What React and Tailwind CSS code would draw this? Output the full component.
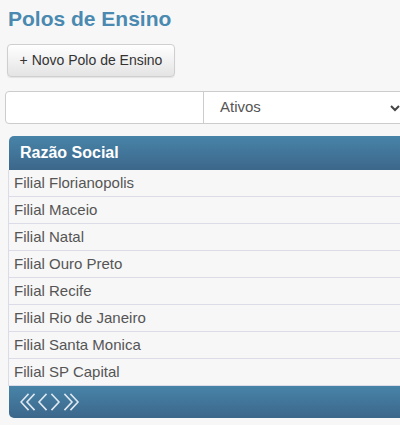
import React from "react";

const rows = [
  "Filial Florianopolis",
  "Filial Maceio",
  "Filial Natal",
  "Filial Ouro Preto",
  "Filial Recife",
  "Filial Rio de Janeiro",
  "Filial Santa Monica",
  "Filial SP Capital",
];

function Pager() {
  return (
    <svg width="64" height="18" viewBox="0 0 64 18" fill="none" stroke="#dfe8f0" strokeWidth="1.6" strokeLinecap="square">
      <polyline points="8,1.5 1,9 8,16.5" />
      <polyline points="14,1.5 7,9 14,16.5" />
      <polyline points="26,1.5 19,9 26,16.5" />
      <polyline points="32,1.5 39,9 32,16.5" />
      <polyline points="45,1.5 52,9 45,16.5" />
      <polyline points="51,1.5 58,9 51,16.5" />
    </svg>
  );
}

export default function App() {
  return (
    <div className="w-[400px] h-[425px] overflow-hidden bg-[#f7f7f7] font-['Liberation_Sans',Arial,sans-serif]">
      <h1 className="pl-[8px] pt-[5px] text-[21px] leading-[28px] font-bold text-[#4a89b0]">Polos de Ensino</h1>
      <div className="pl-[7px] mt-[11px]">
        <button className="h-[33px] w-[168px] rounded-[4px] border border-[#cfcfcf] bg-gradient-to-b from-white to-[#e4e4e4] text-[14px] text-[#333] shadow-[0_1px_1px_rgba(0,0,0,0.08)]">
          + Novo Polo de Ensino
        </button>
      </div>
      <div className="flex mt-[14px] pl-[5px] w-[420px]">
        <input className="h-[33px] w-[199px] shrink-0 rounded-l-[4px] border border-[#cccccc] bg-white outline-none" />
        <div className="relative h-[33px] w-[200px] shrink-0 -ml-px border border-[#cccccc] bg-white flex items-center">
          <span className="pl-[16px] text-[15px] text-[#555]">Ativos</span>
          <svg className="absolute left-[186px] top-[13px]" width="10" height="7" viewBox="0 0 10 7" fill="none" stroke="#444" strokeWidth="2">
            <polyline points="1,1 5,5 9,1" />
          </svg>
        </div>
      </div>
      <div className="mt-[12px] ml-[8px] w-[420px]">
        <div className="h-[34px] ml-px rounded-tl-[5px] bg-gradient-to-b from-[#4784a8] to-[#3c678b] flex items-center pl-[11px] text-[16px] font-bold text-white">
          Razão Social
        </div>
        <div className="border-l border-[#dcdbe8]">
          {rows.map((r) => (
            <div key={r} className="h-[27px] border-b border-[#dcdbe8] flex items-center pl-[5px] text-[15px] text-[#555]">
              {r}
            </div>
          ))}
        </div>
        <div className="h-[32px] ml-px rounded-bl-[5px] bg-gradient-to-b from-[#4784a8] to-[#3c678b] flex items-center pl-[11px]">
          <Pager />
        </div>
      </div>
    </div>
  );
}
